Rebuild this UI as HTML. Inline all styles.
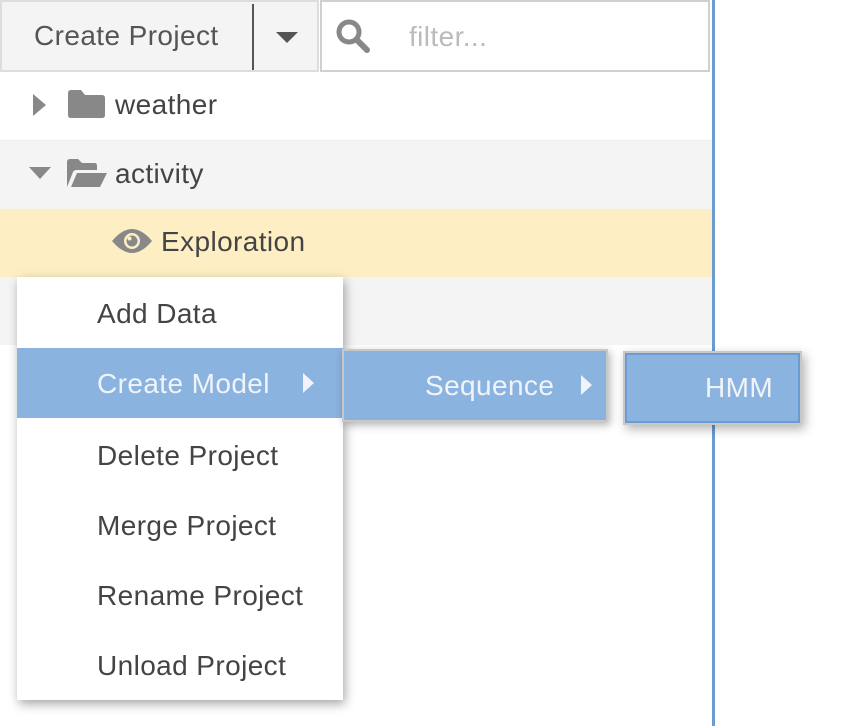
<!DOCTYPE html>
<html><head><style>
*{box-sizing:border-box;margin:0;padding:0}
body{width:848px;height:726px;background:#fff;position:relative;overflow:hidden;font-family:"Liberation Sans",sans-serif;color:#444}
.abs{position:absolute}
.t{position:absolute;font-size:28px;line-height:30px;white-space:nowrap;letter-spacing:0.4px}
</style></head><body>
<!-- toolbar -->
<div class="abs" style="left:0;top:0;width:319px;height:72px;background:#f4f4f4;border:2px solid #ddd"></div>
<div class="t" style="left:34px;top:21px;color:#555">Create Project</div>
<div class="abs" style="left:252px;top:4px;width:2px;height:66px;background:#555"></div>
<svg class="abs" style="left:276px;top:32px" width="22" height="12"><path d="M0 0H22L11 11Z" fill="#555"/></svg>
<div class="abs" style="left:320px;top:0;width:390px;height:72px;background:#fff;border:2px solid #d0d0d0"></div>
<svg class="abs" style="left:335px;top:18px" width="36" height="36" viewBox="0 0 36 36"><circle cx="14" cy="14" r="10" fill="none" stroke="#888" stroke-width="5"/><path d="M22 22L32 32" stroke="#888" stroke-width="6" stroke-linecap="round"/></svg>
<div class="t" style="left:409px;top:22px;color:#bbb">filter...</div>
<!-- rows -->
<div class="abs" style="left:0;top:140px;width:712px;height:1px;background:#eee"></div>
<div class="abs" style="left:0;top:141px;width:712px;height:68px;background:#f4f4f4"></div>
<div class="abs" style="left:0;top:209px;width:712px;height:68px;background:#fdefc3"></div>
<div class="abs" style="left:0;top:277px;width:712px;height:68px;background:#f4f4f4"></div>
<svg class="abs" style="left:33px;top:94px" width="14" height="22"><path d="M0 0L13 11L0 22Z" fill="#888"/></svg>
<svg class="abs" style="left:68px;top:90px" width="37" height="28"><path d="M3 0H13L17 5H34Q37 5 37 8V25Q37 28 34 28H3Q0 28 0 25V3Q0 0 3 0Z" fill="#888"/></svg>
<div class="t" style="left:115px;top:90px">weather</div>
<svg class="abs" style="left:29px;top:167px" width="22" height="13"><path d="M0 0H22L11 12Z" fill="#888"/></svg>
<svg class="abs" style="left:65px;top:159px" width="42" height="28"><path d="M2 28V3Q2 0 5 0H13L17 4H30Q32 4 32 7V11H12Q9 11 8 13L2 28Z M6 28L12 14H42L35 28Z" fill="#888"/></svg>
<div class="t" style="left:115px;top:159px">activity</div>
<svg class="abs" style="left:112px;top:228px" width="40" height="26" viewBox="0 0 40 26"><path d="M0 13Q20 -11 40 13Q20 37 0 13Z" fill="#888"/><circle cx="20" cy="13" r="8" fill="#fdefc3"/><circle cx="20" cy="13" r="5.5" fill="#888"/><circle cx="17.5" cy="10.5" r="2" fill="#fdefc3"/></svg>
<div class="t" style="left:161px;top:227px">Exploration</div>
<!-- blue line -->
<div class="abs" style="left:712px;top:0;width:3px;height:726px;background:#6a9bd1"></div>
<!-- menu -->
<div class="abs" style="left:17px;top:277px;width:326px;height:423px;background:#fff;box-shadow:2px 4px 10px rgba(0,0,0,.35)"></div>
<div class="abs" style="left:17px;top:348px;width:326px;height:70px;background:#8bb3df"></div>
<div class="t" style="left:97px;top:299px">Add Data</div>
<div class="t" style="left:97px;top:369px;color:#f0f4fa">Create Model</div>
<svg class="abs" style="left:303px;top:373px" width="12" height="20"><path d="M0 0L11 10L0 20Z" fill="#f0f4fa"/></svg>
<div class="t" style="left:97px;top:441px">Delete Project</div>
<div class="t" style="left:97px;top:511px">Merge Project</div>
<div class="t" style="left:97px;top:581px">Rename Project</div>
<div class="t" style="left:97px;top:651px">Unload Project</div>
<!-- submenu -->
<div class="abs" style="left:342px;top:349px;width:266px;height:73px;background:#8bb3df;border:2px solid #c8c8c8;box-shadow:2px 3px 8px rgba(0,0,0,.3)"></div>
<div class="t" style="left:425px;top:371px;color:#f0f4fa">Sequence</div>
<svg class="abs" style="left:581px;top:375px" width="12" height="20"><path d="M0 0L11 10L0 20Z" fill="#f0f4fa"/></svg>
<div class="abs" style="left:623px;top:351px;width:179px;height:74px;background:#8bb3df;border:2px solid #c8c8c8;box-shadow:3px 4px 10px rgba(0,0,0,.3)"></div>
<div class="abs" style="left:625px;top:353px;width:175px;height:70px;border:2px solid #6a9bd1"></div>
<div class="t" style="left:705px;top:373px;color:#f0f4fa">HMM</div>
</body></html>
